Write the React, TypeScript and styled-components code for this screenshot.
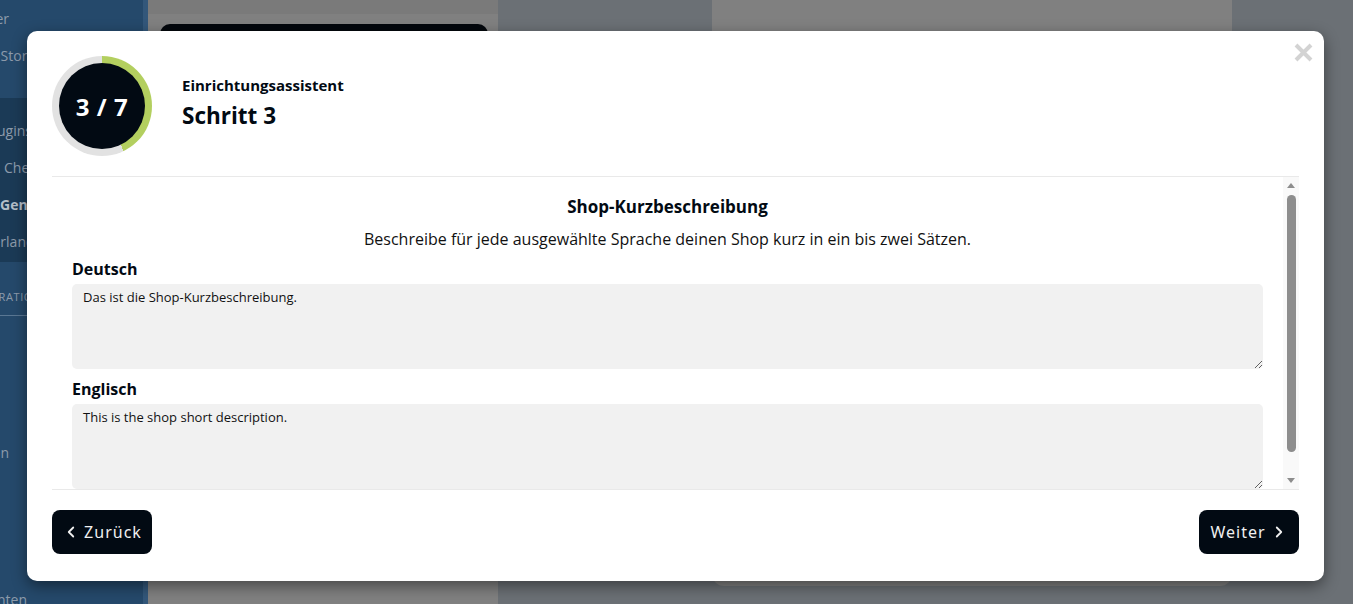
import React from 'react';
import styled, { createGlobalStyle } from 'styled-components';
import { ChevronLeft, ChevronRight } from 'lucide-react';

const GlobalStyle = createGlobalStyle`
  html, body { margin: 0; padding: 0; width: 1353px; height: 604px; overflow: hidden; }
  body { font-family: "Open Sans", "Noto Sans", sans-serif; }
  * { box-sizing: border-box; }
`;

const Page = styled.div`
  position: relative;
  width: 1353px;
  height: 604px;
  display: grid;
  grid-template-columns: 143px 5px 350px 214px 520px 1fr;
  background: #6b7075;
  overflow: hidden;
`;

/* ---------- dimmed background app ---------- */
const Sidebar = styled.nav`
  background: #25496b;
  overflow: hidden;
  display: flex;
  flex-direction: column;
  font-size: 14px;
`;

const NavGroup = styled.div<{ $dark?: boolean; $pad: string }>`
  background: ${(p) => (p.$dark ? '#1b3a56' : 'transparent')};
  display: flex;
  flex-direction: column;
  padding: ${(p) => p.$pad};
`;

const NavItem = styled.div<{ $shift: number; $bold?: boolean }>`
  height: 37px;
  line-height: 37px;
  white-space: nowrap;
  margin-left: ${(p) => p.$shift}px;
  font-weight: ${(p) => (p.$bold ? 700 : 400)};
  color: ${(p) => (p.$bold ? '#b4bec8' : '#8d9bab')};
`;

const NavHeading = styled.div`
  margin: 25px 60px 0 -36px;
  padding-bottom: 8px;
  border-bottom: 1px solid #5a7793;
  font-size: 11px;
  line-height: 20px;
  letter-spacing: 0.6px;
  text-transform: uppercase;
  white-space: nowrap;
  color: #8d9bab;
`;

const Stripe = styled.div`
  background: #33577a;
`;

const Workspace = styled.div`
  background: #808080;
  display: flex;
  flex-direction: column;
`;

const WorkspaceBar = styled.div`
  height: 14px;
  background: #7a7a7a;
`;

const DarkBlock = styled.div`
  margin: 10px 10px 0 12px;
  height: 44px;
  background: #03070c;
  border-radius: 10px;
`;

const Gap = styled.div``;

const Card = styled.div`
  height: 586px;
  background: #808080;
  border-radius: 0 0 12px 12px;
`;

/* ---------- modal ---------- */
const Overlay = styled.div`
  position: absolute;
  inset: 0;
  padding: 31px 29px 23px 27px;
  display: flex;
`;

const Modal = styled.div`
  position: relative;
  flex: 1;
  background: #ffffff;
  border-radius: 10px;
  box-shadow: 0 5px 15px rgba(0, 0, 0, 0.45);
  padding: 25px 25px 26px;
  display: flex;
  flex-direction: column;
  color: #020a13;
`;

const CloseButton = styled.button`
  position: absolute;
  top: 12px;
  right: 11px;
  width: 19px;
  height: 19px;
  padding: 0;
  border: none;
  background: none;
  display: flex;
`;

const Header = styled.header`
  display: flex;
  gap: 30px;
  padding-bottom: 20px;
  border-bottom: 1px solid #e9e9e9;
`;

const Ring = styled.div`
  width: 100px;
  height: 100px;
  flex-shrink: 0;
  border-radius: 50%;
  display: flex;
  align-items: center;
  justify-content: center;
`;

const RingInner = styled.div`
  width: 86px;
  height: 86px;
  border-radius: 50%;
  background: #020a13;
  color: #ffffff;
  font-size: 24px;
  font-weight: 700;
  letter-spacing: 0.5px;
  display: flex;
  align-items: center;
  justify-content: center;
`;

const HeaderText = styled.div`
  margin-top: 19px;
  display: flex;
  flex-direction: column;
  gap: 5px;
`;

const Kicker = styled.div`
  font-size: 15px;
  font-weight: 700;
  line-height: 20px;
`;

const Title = styled.h1`
  margin: 0;
  font-size: 22.5px;
  font-weight: 700;
  line-height: 31px;
`;

const ScrollRegion = styled.div`
  height: 313px;
  display: flex;
  border-bottom: 1px solid #e9e9e9;
`;

const ScrollContent = styled.div`
  flex: 1;
  min-width: 0;
  overflow: hidden;
`;

const ScrollTrack = styled.div`
  width: 16px;
  flex-shrink: 0;
  background: #f9f9f9;
  display: flex;
  flex-direction: column;
  align-items: center;
`;

const ScrollArrow = styled.div<{ $down?: boolean }>`
  height: 16px;
  width: 16px;
  display: flex;
  justify-content: center;
  align-items: flex-start;
  padding-top: ${(p) => (p.$down ? '5px' : '6px')};
  margin-top: ${(p) => (p.$down ? 'auto' : '0')};

  &::before {
    content: '';
    width: 0;
    height: 0;
    border-left: 4.5px solid transparent;
    border-right: 4.5px solid transparent;
    ${(p) =>
      p.$down ? 'border-top: 5px solid #8d8d8d;' : 'border-bottom: 5px solid #8d8d8d;'}
  }
`;

const ScrollThumb = styled.div`
  width: 9px;
  height: 257px;
  margin-top: 2px;
  border-radius: 5px;
  background: #8d8d8d;
`;

const StepContent = styled.section`
  padding: 18px 20px 30px;
  display: flex;
  flex-direction: column;
`;

const StepTitle = styled.h2`
  margin: 0;
  text-align: center;
  font-size: 17px;
  font-weight: 700;
  line-height: 24px;
`;

const StepText = styled.p`
  margin: 8px 0 0;
  text-align: center;
  font-size: 16px;
  line-height: 24px;
  color: #111;
`;

const Field = styled.label<{ $first?: boolean }>`
  display: flex;
  flex-direction: column;
  gap: 3px;
  margin-top: ${(p) => (p.$first ? '6px' : '8px')};
`;

const FieldLabel = styled.span`
  font-size: 16px;
  font-weight: 700;
  line-height: 24px;
`;

const TextArea = styled.textarea`
  display: block;
  width: 100%;
  height: 85px;
  resize: vertical;
  border: none;
  outline: none;
  border-radius: 5px;
  background: #f1f1f1;
  padding: 5px 11px;
  font-family: "Open Sans", "Noto Sans", sans-serif;
  font-size: 13px;
  line-height: 17px;
  color: #111;
`;

const Footer = styled.footer`
  padding-top: 20px;
  display: flex;
  justify-content: space-between;
`;

const NavButton = styled.button`
  width: 100px;
  height: 44px;
  padding: 0;
  border: none;
  border-radius: 8px;
  background: #020a13;
  color: #f0f0f0;
  font-family: "Noto Sans", "Open Sans", sans-serif;
  font-size: 16px;
  letter-spacing: 1px;
  display: flex;
  align-items: center;
  justify-content: center;
  gap: 4px;
`;

const navTop = [
  { text: 'Partner', shift: -40 },
  { text: 'App Store', shift: -29 },
];
const navBand = [
  { text: 'Plugins', shift: -15 },
  { text: 'Checkout', shift: 4 },
  { text: 'Generell', shift: 0, bold: true },
  { text: 'Niederlande', shift: -38 },
];

export default function App() {
  const step = 3;
  const total = 7;
  const deg = (step / total) * 360;

  return (
    <>
      <GlobalStyle />
      <Page>
        <Sidebar>
          <NavGroup $pad="0 0 24px">
            {navTop.map((n) => (
              <NavItem key={n.text} $shift={n.shift}>
                {n.text}
              </NavItem>
            ))}
          </NavGroup>
          <NavGroup $dark $pad="14px 0 2px">
            {navBand.map((n) => (
              <NavItem key={n.text} $shift={n.shift} $bold={n.bold}>
                {n.text}
              </NavItem>
            ))}
          </NavGroup>
          <NavHeading>Integrationen</NavHeading>
          <NavGroup $pad="118px 0 0">
            <NavItem $shift={-87}>Versandoption</NavItem>
          </NavGroup>
          <NavGroup $pad="110px 0 0">
            <NavItem $shift={-20}>Konten</NavItem>
          </NavGroup>
        </Sidebar>
        <Stripe />
        <Workspace>
          <WorkspaceBar />
          <DarkBlock />
        </Workspace>
        <Gap />
        <Card />
        <Gap />

        <Overlay>
          <Modal role="dialog" aria-label="Einrichtungsassistent">
            <CloseButton aria-label="Schließen">
              <svg width="19" height="19" viewBox="0 0 19 19">
                <path d="M2 2 L17 17 M17 2 L2 17" stroke="#d3d3d3" strokeWidth="4" />
              </svg>
            </CloseButton>

            <Header>
              <Ring
                style={{
                  background: `conic-gradient(#b3cf5f 0deg ${deg}deg, #e2e2e2 ${deg}deg 360deg)`,
                }}
              >
                <RingInner>
                  {step} / {total}
                </RingInner>
              </Ring>
              <HeaderText>
                <Kicker>Einrichtungsassistent</Kicker>
                <Title>Schritt {step}</Title>
              </HeaderText>
            </Header>

            <ScrollRegion>
              <ScrollContent>
                <StepContent>
                  <StepTitle>Shop-Kurzbeschreibung</StepTitle>
                  <StepText>
                    Beschreibe für jede ausgewählte Sprache deinen Shop kurz in ein bis zwei Sätzen.
                  </StepText>
                  <Field $first>
                    <FieldLabel>Deutsch</FieldLabel>
                    <TextArea readOnly defaultValue="Das ist die Shop-Kurzbeschreibung." />
                  </Field>
                  <Field>
                    <FieldLabel>Englisch</FieldLabel>
                    <TextArea readOnly defaultValue="This is the shop short description." />
                  </Field>
                </StepContent>
              </ScrollContent>
              <ScrollTrack aria-hidden="true">
                <ScrollArrow />
                <ScrollThumb />
                <ScrollArrow $down />
              </ScrollTrack>
            </ScrollRegion>

            <Footer>
              <NavButton>
                <ChevronLeft size={18} strokeWidth={2.4} />
                Zurück
              </NavButton>
              <NavButton>
                Weiter
                <ChevronRight size={18} strokeWidth={2.4} />
              </NavButton>
            </Footer>
          </Modal>
        </Overlay>
      </Page>
    </>
  );
}
